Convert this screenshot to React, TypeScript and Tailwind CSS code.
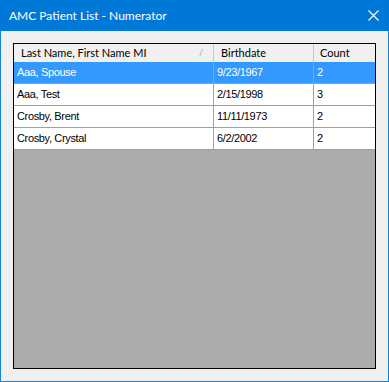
const rows = [
  { name: "Aaa, Spouse", birth: "9/23/1967", count: "2", selected: true },
  { name: "Aaa, Test", birth: "2/15/1998", count: "3", selected: false },
  { name: "Crosby, Brent", birth: "11/11/1973", count: "2", selected: false },
  { name: "Crosby, Crystal", birth: "6/2/2002", count: "2", selected: false },
];

const App = () => {
  return (
    <div className="w-[389px] h-[382px] flex flex-col bg-[#f0f0f0] border border-t-0 border-[#1883d7]">
      {/* Title bar */}
      <div className="h-[31px] shrink-0 bg-[#0078d7] flex items-center justify-between pl-[9px] pr-[10px] -mx-px">
        <span className="text-white text-[12px] font-['Lato',sans-serif] leading-none">
          AMC Patient List - Numerator
        </span>
        <svg width="11" height="11" viewBox="0 0 11 11">
          <path d="M0.5 0.5 L10.5 10.5 M10.5 0.5 L0.5 10.5" stroke="white" strokeWidth="1.1" />
        </svg>
      </div>

      {/* Grid */}
      <div className="flex-1 p-3">
        <div className="h-full border border-black bg-[#ababab] flex flex-col font-['Liberation_Sans',Arial,sans-serif] text-[11px] tracking-[-0.35px]">
          <div className="flex h-[18px] bg-[#f0f0f0] text-black text-[11px] font-['Lato',sans-serif] tracking-normal">
            <div className="w-[200px] flex items-center justify-between pl-[7px] pr-[10px] border-r border-[#c8c8c8]">
              <span>Last Name, First Name MI</span>
              <span className="text-[9px] text-[#a0a0a0]">/</span>
            </div>
            <div className="w-[100px] flex items-center pl-[7px] border-r border-[#c8c8c8]">Birthdate</div>
            <div className="w-[61px] flex items-center pl-[6px]">Count</div>
          </div>
          {rows.map((r) => (
            <div
              key={r.name}
              className={`flex h-[22px] border-b border-[#a0a0a0] ${
                r.selected ? "bg-[#3399ff] text-white" : "bg-white text-black"
              }`}
            >
              <div className="w-[200px] flex items-center pl-[3px] border-r border-[#a0a0a0]">{r.name}</div>
              <div className="w-[100px] flex items-center pl-[3px] border-r border-[#a0a0a0]">{r.birth}</div>
              <div className="w-[60px] flex items-center pl-[3px]">{r.count}</div>
            </div>
          ))}
        </div>
      </div>
    </div>
  );
};

export default App;
